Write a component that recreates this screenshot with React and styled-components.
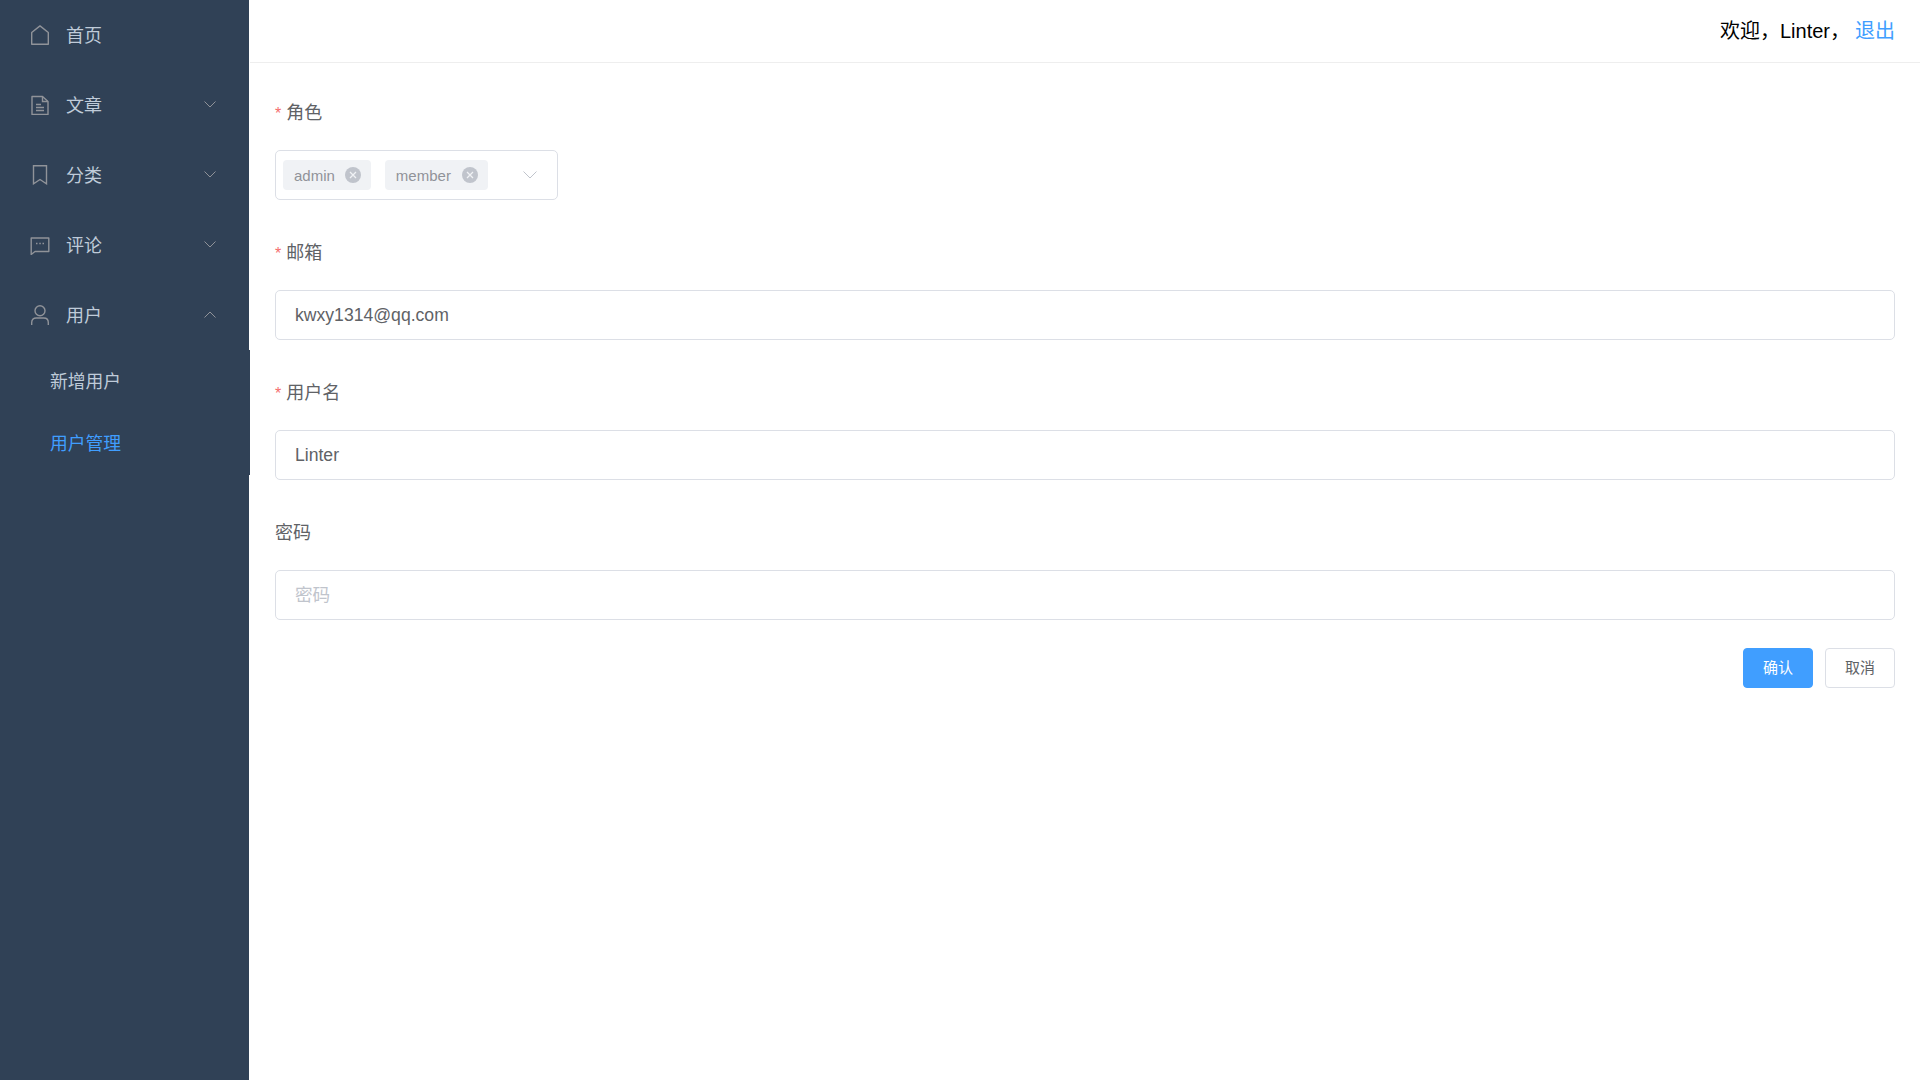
import React from 'react';
import styled, { createGlobalStyle } from 'styled-components';

const GlobalStyle = createGlobalStyle`
  html, body {
    margin: 0;
    padding: 0;
    height: 100%;
    background: #fff;
    font-family: "Liberation Sans", "Noto Sans CJK SC", sans-serif;
  }
  #root { height: 100%; }
  * { box-sizing: border-box; }
`;

const Layout = styled.div`
  display: flex;
  height: 1080px;
  overflow: hidden;
`;

const Aside = styled.aside`
  flex: 0 0 249px;
  width: 249px;
  background: #304156;
`;

const MenuItem = styled.div`
  display: flex;
  align-items: center;
  height: 70px;
  padding: 0 33px 0 30px;
  color: #bfcbd9;
  font-size: 18px;
`;

const MenuIcon = styled.svg`
  flex: 0 0 20px;
  width: 20px;
  height: 20px;
  margin-right: 16px;
  fill: none;
  stroke: #909399;
  stroke-width: 1.4;
`;

const MenuLabel = styled.span`
  flex: 1;
  margin-top: -2px;
`;

const Chevron = styled.svg`
  width: 12px;
  height: 7px;
  margin-top: -2px;
  fill: none;
  stroke: ${({ $color }) => $color || '#909399'};
  stroke-width: 1;
`;

const SubMenu = styled.div`
  width: 250px;
  background: #304156;
  position: relative;
`;

const SubItem = styled.div`
  display: flex;
  align-items: center;
  height: 62.5px;
  padding: 0 0 3px 50px;
  font-size: 17.8px;
  color: ${({ $active }) => ($active ? '#409eff' : '#bfcbd9')};
`;

const Main = styled.main`
  flex: 1;
  margin-left: 1px;
  min-width: 0;
`;

const Header = styled.header`
  display: flex;
  align-items: center;
  justify-content: flex-end;
  height: 63px;
  padding: 0 25px 3px 0;
  border-bottom: 1px solid #eeeeee;
  font-size: 20px;
  color: #000;
`;

const Logout = styled.a`
  color: #409eff;
  margin-left: 5px;
`;

const Form = styled.form`
  padding: 29px 25px 0;
`;

const Item = styled.div`
  margin-bottom: 32px;
`;

const Label = styled.label`
  display: block;
  height: 40px;
  line-height: 42px;
  margin-bottom: 18px;
  font-size: 18px;
  color: #606266;
`;

const Star = styled.span`
  color: #f56c6c;
  font-size: 16px;
  margin-right: 5px;
`;

const Input = styled.input`
  display: block;
  width: 100%;
  height: 50px;
  padding: 1px 19px 0;
  border: 1px solid #dcdfe6;
  border-radius: 5px;
  outline: none;
  background: #fff;
  font-family: inherit;
  font-size: 17.6px;
  color: #606266;

  &::placeholder {
    color: #c0c4cc;
  }
`;

const Select = styled.div`
  display: flex;
  align-items: center;
  width: 283px;
  height: 50px;
  padding: 0 20px 0 7px;
  border: 1px solid #dcdfe6;
  border-radius: 5px;
`;

const Tag = styled.span`
  display: flex;
  align-items: center;
  height: 30px;
  padding: 0 10px 0 11px;
  margin-right: 14px;
  background: #f0f2f5;
  border-radius: 4px;
  color: #909399;
  font-size: 15px;
`;

const TagClose = styled.svg`
  width: 16px;
  height: 16px;
  margin-left: ${({ $gap }) => $gap}px;
`;

const SelectArrow = styled.svg`
  width: 14px;
  height: 8px;
  margin-left: auto;
  margin-top: -1px;
  fill: none;
  stroke: #c0c4cc;
  stroke-width: 1;
`;

const Actions = styled.div`
  display: flex;
  justify-content: flex-end;
  gap: 12px;
  margin-top: -4px;
`;

const Button = styled.button`
  width: 70px;
  height: 40px;
  padding: 0 0 3px;
  border: 1px solid ${({ $primary }) => ($primary ? '#409eff' : '#dcdfe6')};
  border-radius: 4px;
  background: ${({ $primary }) => ($primary ? '#409eff' : '#fff')};
  color: ${({ $primary }) => ($primary ? '#fff' : '#606266')};
  font-family: inherit;
  font-size: 15px;
`;

const menus = [
  {
    label: '首页',
    icon: <path d="M1.700 7.500 10 .9l8.300 6.600v11.800H1.700z" strokeLinejoin="round" />,
  },
  {
    label: '文章',
    arrow: 'down',
    icon: (
      <>
        <path d="M2 1.500h10.500l5.500 5v13H2z" strokeLinejoin="round" />
        <path d="M12.500 1.500v5H18M6 9.500h5M6 12.500h8M6 15.500h8" />
      </>
    ),
  },
  {
    label: '分类',
    arrow: 'down',
    icon: <path d="M3.500 .8h13v18L10 14.500l-6.500 4.300z" />,
  },
  {
    label: '评论',
    arrow: 'down',
    icon: (
      <>
        <path d="M1.200 3h17.600v13.500H5l-3.800 3z" strokeLinejoin="round" />
        <path d="M6 8.500h1.500M9.300 8.500h1.500M12.500 8.500H14" strokeWidth="1.600" />
      </>
    ),
  },
  {
    label: '用户',
    arrow: 'up',
    icon: (
      <>
        <circle cx="10" cy="5.700" r="5" />
        <path d="M1.700 20v-2.500c0-3 2-4.500 4.500-4.500h7.600c2.500 0 4.500 1.500 4.500 4.500V20" />
      </>
    ),
  },
];

const fields = [
  { label: '邮箱', required: true, value: 'kwxy1314@qq.com' },
  { label: '用户名', required: true, value: 'Linter' },
  { label: '密码', placeholder: '密码' },
];

function CloseCircle({ gap }) {
  return (
    <TagClose viewBox="0 0 16 16" $gap={gap}>
      <circle cx="8" cy="8" r="8" fill="#c0c4cc" />
      <path d="M5 5l6 6M11 5l-6 6" stroke="#f0f2f5" strokeWidth="1.300" />
    </TagClose>
  );
}

export default function App() {
  return (
    <Layout>
      <GlobalStyle />
      <Aside>
        {menus.map((menu) => (
          <MenuItem key={menu.label}>
            <MenuIcon viewBox="0 0 20 20">{menu.icon}</MenuIcon>
            <MenuLabel>{menu.label}</MenuLabel>
            {menu.arrow && (
              <Chevron viewBox="0 0 12 7">
                <path d={menu.arrow === 'down' ? 'M.5.500 6 6 11.500.500' : 'M.5 6.500 6 1l5.500 5.500'} />
              </Chevron>
            )}
          </MenuItem>
        ))}
        <SubMenu>
          <SubItem>新增用户</SubItem>
          <SubItem $active>用户管理</SubItem>
        </SubMenu>
      </Aside>
      <Main>
        <Header>
          欢迎，Linter， <Logout>退出</Logout>
        </Header>
        <Form>
          <Item>
            <Label>
              <Star>*</Star>角色
            </Label>
            <Select>
              <Tag>
                admin
                <CloseCircle gap={10} />
              </Tag>
              <Tag>
                member
                <CloseCircle gap={11} />
              </Tag>
              <SelectArrow viewBox="0 0 14 8">
                <path d="M.5.500 7 7 13.500.500" />
              </SelectArrow>
            </Select>
          </Item>
          {fields.map((field) => (
            <Item key={field.label}>
              <Label>
                {field.required && <Star>*</Star>}
                {field.label}
              </Label>
              <Input readOnly value={field.value} placeholder={field.placeholder} />
            </Item>
          ))}
          <Actions>
            <Button type="button" $primary>确认</Button>
            <Button type="button">取消</Button>
          </Actions>
        </Form>
      </Main>
    </Layout>
  );
}
